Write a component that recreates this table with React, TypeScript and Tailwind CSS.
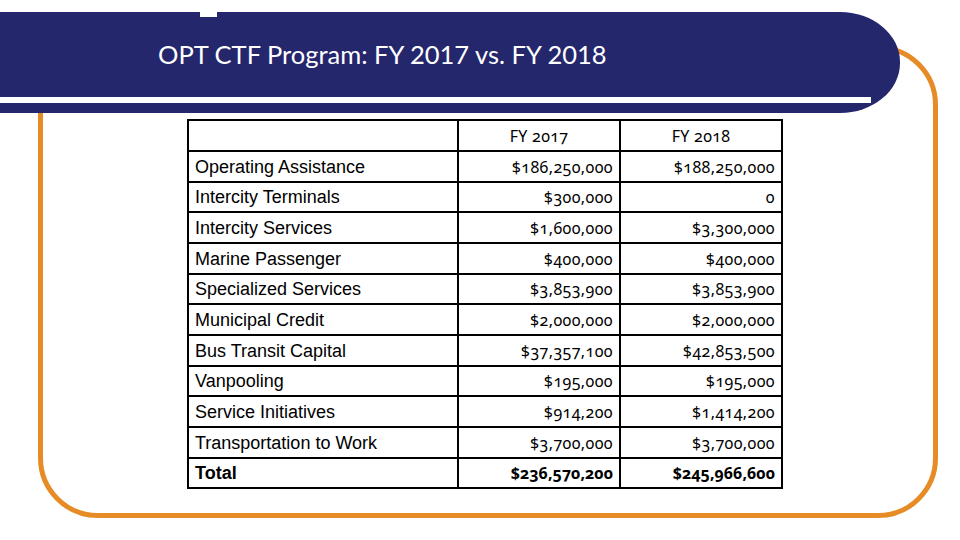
import React from 'react';

interface Row {
  label: string;
  fy2017: string;
  fy2018: string;
  bold?: boolean;
}

const rows: Row[] = [
  { label: 'Operating Assistance', fy2017: '$186,250,000', fy2018: '$188,250,000' },
  { label: 'Intercity Terminals', fy2017: '$300,000', fy2018: '0' },
  { label: 'Intercity Services', fy2017: '$1,600,000', fy2018: '$3,300,000' },
  { label: 'Marine Passenger', fy2017: '$400,000', fy2018: '$400,000' },
  { label: 'Specialized Services', fy2017: '$3,853,900', fy2018: '$3,853,900' },
  { label: 'Municipal Credit', fy2017: '$2,000,000', fy2018: '$2,000,000' },
  { label: 'Bus Transit Capital', fy2017: '$37,357,100', fy2018: '$42,853,500' },
  { label: 'Vanpooling', fy2017: '$195,000', fy2018: '$195,000' },
  { label: 'Service Initiatives', fy2017: '$914,200', fy2018: '$1,414,200' },
  { label: 'Transportation to Work', fy2017: '$3,700,000', fy2018: '$3,700,000' },
  { label: 'Total', fy2017: '$236,570,200', fy2018: '$245,966,600', bold: true },
];

const labelFont = "font-['Liberation_Sans',Arial,sans-serif]";
const numFont = "font-['Noto_Sans',sans-serif] oldstyle-nums";

export default function App() {
  return (
    <div className="relative w-[960px] h-[540px] bg-white overflow-hidden">
      {/* orange frame, sits under the header bar */}
      <div className="absolute left-[38px] top-[45px] w-[900px] h-[473px] border-[5px] border-[#e68b26] rounded-[60px]" />

      <div className="relative pt-[12px]">
        {/* header bar */}
        <div className="relative w-[900px] h-[101px] bg-[#25276d] rounded-r-[60px_50px] flex flex-col">
          <div className="absolute left-[200px] top-0 w-[17px] h-[5px] bg-white" />
          <div className="h-[85px] pl-[158px] pt-[27px]">
            <h1 className="text-white text-[25.5px] leading-[30px] font-['Lato',sans-serif] lining-nums">
              OPT CTF Program: FY 2017 vs. FY 2018
            </h1>
          </div>
          <div className="w-[871px] h-[6px] bg-white" />
        </div>

        {/* table */}
        <table className="ml-[187px] mt-[6px] border-collapse table-fixed text-black">
          <colgroup>
            <col className="w-[270px]" />
            <col className="w-[162px]" />
            <col className="w-[162px]" />
          </colgroup>
          <tbody>
            <tr className="h-[31px]">
              <td className="border-2 border-black" />
              <td className={`border-2 border-black text-center text-[16px] tracking-[0.3px] ${numFont}`}>FY 2017</td>
              <td className={`border-2 border-black text-center text-[16px] tracking-[0.3px] ${numFont}`}>FY 2018</td>
            </tr>
            {rows.map((row) => (
              <tr key={row.label} className="h-[30.67px]">
                <td className={`border-2 border-black px-[6px] pt-[1px] text-[18px] leading-none ${labelFont} ${row.bold ? 'font-bold' : ''}`}>
                  {row.label}
                </td>
                <td className={`border-2 border-black px-[6px] pt-[1px] text-right text-[16px] leading-none ${numFont} ${row.bold ? 'font-bold' : 'tracking-[0.4px]'}`}>
                  {row.fy2017}
                </td>
                <td className={`border-2 border-black px-[6px] pt-[1px] text-right text-[16px] leading-none ${numFont} ${row.bold ? 'font-bold' : 'tracking-[0.4px]'}`}>
                  {row.fy2018}
                </td>
              </tr>
            ))}
          </tbody>
        </table>
      </div>
    </div>
  );
}
